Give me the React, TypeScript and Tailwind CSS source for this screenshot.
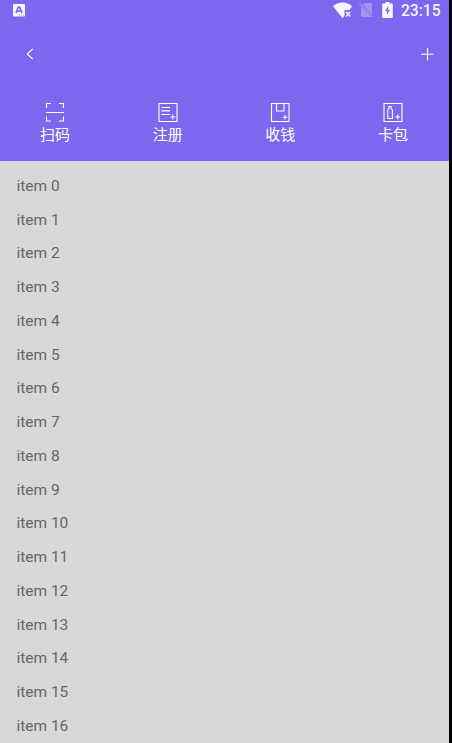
import type { ReactNode } from "react";

function ScanIcon() {
  return (
    <svg className="shrink-0" width="22" height="22" viewBox="0 0 22 22" fill="none" stroke="white" strokeWidth="1.1">
      <path d="M2.5 7V2.5H7M15 2.5h4.5V7M2.5 15.5v4.5H7M15 20h4.5v-4.5M2 11.5h18" />
    </svg>
  );
}

function RegisterIcon() {
  return (
    <svg className="shrink-0" width="22" height="22" viewBox="0 0 22 22" fill="none" stroke="white" strokeWidth="1.1">
      <path d="M2 2.5h18v18h-18zM4.5 6.5h8.5M4.5 9.9h8.5M4.5 13.5h8.5M15.8 13.5v5M13.3 16h5" />
    </svg>
  );
}

function CollectIcon() {
  return (
    <svg className="shrink-0" width="22" height="22" viewBox="0 0 22 22" fill="none" stroke="white" strokeWidth="1.1">
      <path d="M2.5 2.5h17.5v18H2.5zM7.5 2.5v7.5h7.5v-7.5M16 14v4.5M13.7 16.2h4.6" />
    </svg>
  );
}

function WalletIcon() {
  return (
    <svg className="shrink-0" width="22" height="22" viewBox="0 0 22 22" fill="none" stroke="white" strokeWidth="1.1">
      <path d="M2 2.5h18v18H2zM5.8 17.5v-8.5l1.3-1.8V5.5h2v1.7l1.3 1.8v8.5zM15.8 13.5v5M13.3 16h5" />
    </svg>
  );
}

function StatusBar() {
  return (
    <div className="flex h-[21px] items-start justify-between pl-[12px] pr-[9px]">
      <svg className="mt-[3px]" width="14" height="14" viewBox="0 0 14 14">
        <rect x="1" y="1" width="12" height="12.5" rx="1" fill="#f7f5ff" />
        <path d="M4 10 6.4 4h1.2L10 10M5.2 8.2h3.6" fill="none" stroke="#7b68ee" strokeWidth="1.7" />
        <path d="M7.5 11.5v1.4M9.5 11.5v1.4M11.5 11.5v1.4" stroke="#9b8df2" strokeWidth="0.7" />
      </svg>
      <div className="flex items-start">
        <svg className="mt-[2px]" width="20" height="17" viewBox="0 0 20 17">
          <path d="M0 4.2C5.5-.8 13.5-.8 19 4.2L16.5 8H11.5v5.8L9.5 16z" fill="#f9f8ff" />
          <path d="m13 9.8 4.3 4.7m0-4.7L13 14.5" stroke="#f9f8ff" strokeWidth="1.4" />
        </svg>
        <svg className="ml-[6px] mt-[2px]" width="15" height="17" viewBox="0 0 15 17">
          <path d="M5.5 1H12q1 0 1 1v10.8L3.9 3zM2 4.2 12.4 15H3q-1 0-1-1z" fill="#a194f3" />
          <path d="m.5 1.5 13.3 13.7" stroke="#a194f3" strokeWidth="1.1" />
        </svg>
        <svg className="ml-[8px] mt-[2px]" width="11" height="16" viewBox="0 0 11 16">
          <path d="M1 1.5h2.5V0h4v1.5H10q.8 0 .8 1V15q0 1-.8 1H1q-.8 0-.8-1V2.5q0-1 .8-1z" fill="#f9f8ff" />
          <path d="M6.2 4 3.2 9H5v3.7L8 7.8H6.2z" fill="#7b68ee" />
        </svg>
        <span className="ml-[8px] w-[39px] whitespace-nowrap pt-px text-[15.6px] font-medium leading-[21px] text-[#f5f3ff]">23:15</span>
      </div>
    </div>
  );
}

function Action({ icon, label }: { icon: ReactNode; label: string }) {
  return (
    <button className="flex w-[30px] flex-col items-center text-[15px] leading-[22px] text-white">
      {icon}
      <span className="whitespace-nowrap pt-px">{label}</span>
    </button>
  );
}

export default function App() {
  return (
    <main className="h-[743px] overflow-hidden bg-black pr-[3px] font-['Roboto','Noto_Sans_CJK_SC',sans-serif]">
      <div className="h-full bg-[#d8d8d8]">
        <header className="h-[161px] bg-[#7b68ee]">
          <StatusBar />
          <nav className="flex h-[80px] items-start justify-between pl-[24px] pr-[15px] pt-[26px]">
            <svg className="mt-px" width="12" height="12" viewBox="0 0 12 12" fill="none" stroke="white" strokeWidth="1.1">
              <path d="M8.7 1 3.2 6l5.5 5" />
            </svg>
            <svg width="14" height="14" viewBox="0 0 14 14" fill="none" stroke="white" strokeWidth="1.1">
              <path d="M7.5 1v12.5M1 7.3h12.5" />
            </svg>
          </nav>
          <div className="flex justify-between pl-[40px] pr-[41px]">
            <Action icon={<ScanIcon />} label="扫码" />
            <Action icon={<RegisterIcon />} label="注册" />
            <Action icon={<CollectIcon />} label="收钱" />
            <Action icon={<WalletIcon />} label="卡包" />
          </div>
        </header>
        <ul className="pt-[8.6px]">
          {Array.from({ length: 17 }, (_, i) => (
            <li key={i} className="flex h-[33.75px] items-center pl-[16.4px] text-[15.5px] text-[#666666]">
              item {i}
            </li>
          ))}
        </ul>
      </div>
    </main>
  );
}
